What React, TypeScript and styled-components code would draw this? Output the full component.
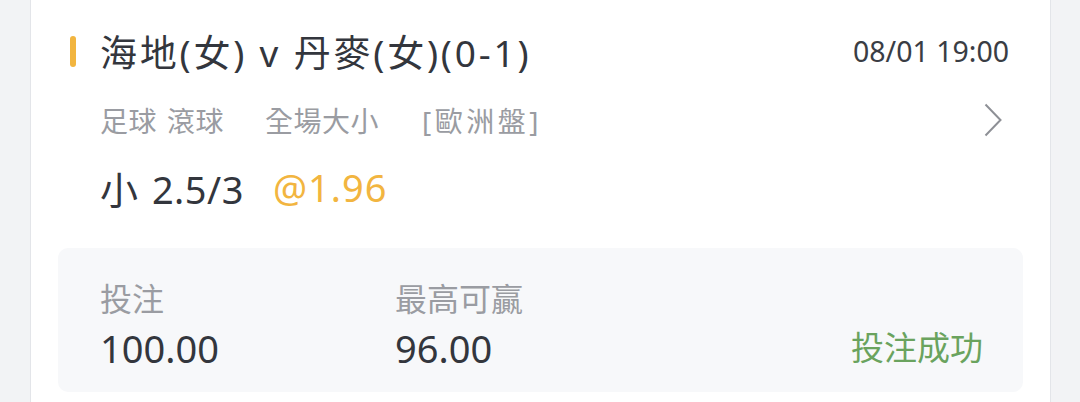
import styled, { createGlobalStyle } from 'styled-components';

const GlobalStyle = createGlobalStyle`
    html, body {
        margin: 0;
        padding: 0;
        background: #f2f3f5;
        font-family: "Noto Sans", "Noto Sans CJK TC", sans-serif;
    }
`;

export default function App() {
    return (
        <Page>
            <GlobalStyle />
            <Card>
                <Header>
                    <Marker />
                    <Title>海地(女) v 丹麥(女)(0-1)</Title>
                    <Time>08/01 19:00</Time>
                </Header>
                <SubRow>
                    <SubText>
                        <SubItem>足球</SubItem>
                        <SubItem $gap={10}>滾球</SubItem>
                        <SubItem $gap={41}>全場大小</SubItem>
                        <SubItem $gap={43} $spread={3.5}>[歐洲盤]</SubItem>
                    </SubText>
                    <Chevron viewBox="0 0 18 34">
                        <path d="M1.5 1.5 L16.5 17 L1.5 32.5" />
                    </Chevron>
                </SubRow>
                <Pick>
                    小 2.5/3<Odds>@1.96</Odds>
                </Pick>
                <Summary>
                    <Stat>
                        <StatLabel>投注</StatLabel>
                        <StatValue>100.00</StatValue>
                    </Stat>
                    <Stat>
                        <StatLabel>最高可贏</StatLabel>
                        <StatValue>96.00</StatValue>
                    </Stat>
                    <Status>投注成功</Status>
                </Summary>
            </Card>
        </Page>
    );
}

const Page = styled.div`
    height: 402px;
    padding: 0 29px 0 30px;
    overflow: hidden;
    box-sizing: border-box;
`;

const Card = styled.div`
    background: #fff;
    border-left: 1px solid #e3e5e9;
    border-right: 1px solid #e3e5e9;
    height: 440px;
    padding: 29px 27px 0 27px;
    box-sizing: border-box;
`;

const Header = styled.div`
    display: flex;
    align-items: center;
    height: 44px;
`;

const Marker = styled.span`
    width: 6px;
    height: 31px;
    border-radius: 3px;
    background: #f2b53f;
    margin: 0 24px 0 12px;
`;

const Title = styled.div`
    flex: 1;
    font-size: 37px;
    color: #33363d;
    letter-spacing: 2.8px;
`;

const Time = styled.div`
    font-size: 28.5px;
    color: #3a3d44;
    margin-right: 14px;
`;

const SubRow = styled.div`
    display: flex;
    align-items: center;
    justify-content: space-between;
    margin-top: 27px;
    padding-left: 42px;
    height: 40px;
`;

const SubText = styled.div`
    display: flex;
    font-size: 28px;
    color: #9a9ca2;
`;

const SubItem = styled.span<{ $gap?: number; $spread?: number }>`
    margin-left: ${(p) => p.$gap ?? 0}px;
    letter-spacing: ${(p) => p.$spread ?? 0.5}px;
`;

const Chevron = styled.svg`
    width: 18px;
    height: 34px;
    margin-right: 21px;
    fill: none;
    stroke: #8e9096;
    stroke-width: 2;
`;

const Pick = styled.div`
    margin-top: 23px;
    padding-left: 42px;
    font-size: 38px;
    color: #33363d;
    height: 48px;
    display: flex;
    align-items: center;
    word-spacing: 3px;
    letter-spacing: 0.5px;
`;

const Odds = styled.span`
    color: #f2b540;
    margin-left: 29px;
    letter-spacing: 1px;
`;

const Summary = styled.div`
    margin-top: 37px;
    background: #f7f8fa;
    border-radius: 10px;
    height: 144px;
    display: grid;
    grid-template-columns: 295px 1fr auto;
    align-items: end;
    padding: 31px 40px 22px 42px;
    box-sizing: border-box;
`;

const Stat = styled.div`
    display: flex;
    flex-direction: column;
    gap: 7px;
`;

const StatLabel = styled.div`
    font-size: 32px;
    color: #9a9ca2;
    line-height: 40px;
`;

const StatValue = styled.div`
    font-size: 38px;
    color: #33363d;
    line-height: 44px;
`;

const Status = styled.div`
    font-size: 33px;
    color: #6aa35e;
    line-height: 44px;
`;
